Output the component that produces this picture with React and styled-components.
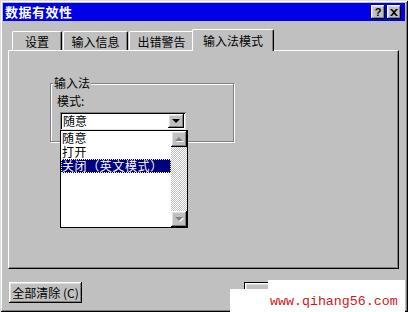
import styled, { createGlobalStyle } from "styled-components";

// GLOBAL ////////////////////////////////////////////////////////////
const GlobalStyle = createGlobalStyle`
  html, body {
    margin: 0;
    padding: 0;
    background: #c0c0c0;
  }
  body {
    font-family: "Noto Sans CJK SC", "Noto Sans", sans-serif;
    font-size: 12px;
    color: #000;
  }
  * {
    box-sizing: border-box;
  }
`;

const tabs = [
  { label: "设置", width: 50 },
  { label: "输入信息", width: 65 },
  { label: "出错警告", width: 65 },
  { label: "输入法模式", width: 82, active: true },
];

const options = ["随意", "打开", "关闭（英文模式）"];

const App = () => {
  return (
    <>
      <GlobalStyle />
      <Window>
        <TitleBar>
          <Title>数据有效性</Title>
          <CaptionButtons>
            <CaptionButton>?</CaptionButton>
            <CaptionButton>
              <svg width="8" height="7" viewBox="0 0 8 7">
                <path d="M0 0h2l2 2 2-2h2L5 3.5 8 7H6L4 5 2 7H0l3-3.5z" fill="#000" />
              </svg>
            </CaptionButton>
          </CaptionButtons>
        </TitleBar>

        <TabRow>
          {tabs.map((t) => (
            <Tab key={t.label} $width={t.width} $active={t.active}>
              {t.label}
            </Tab>
          ))}
        </TabRow>

        <Panel>
          <GroupBox>
            <Legend>输入法</Legend>
            <FieldLabel>模式:</FieldLabel>
            <Combo>
              <ComboValue>随意</ComboValue>
              <ArrowButton>
                <Arrow />
              </ArrowButton>
              <ListBox>
                <Items>
                  {options.map((o, i) => (
                    <Item key={o} $selected={i === 2}>
                      {o}
                    </Item>
                  ))}
                </Items>
                <ScrollBar>
                  <ScrollButton>
                    <ScrollArrow $up />
                  </ScrollButton>
                  <Track />
                  <ScrollButton>
                    <ScrollArrow />
                  </ScrollButton>
                </ScrollBar>
              </ListBox>
            </Combo>
          </GroupBox>
        </Panel>

        <Footer>
          <Button>全部清除 (C)</Button>
          {/* OK / Cancel sit under the watermark, only an edge shows */}
          <DefaultButton />
          <Button $width={75} />
        </Footer>

        <Watermark>www.qihang56.com</Watermark>
      </Window>
    </>
  );
};

export default App;

// STYLED COMPONENTS ////////////////////////////////////////////////////////////

const raised = `
  background: #c0c0c0;
  box-shadow: inset -1px -1px #000, inset 1px 1px #fff, inset -2px -2px #808080, inset 2px 2px #dfdfdf;
`;

const Window = styled.div`
  position: relative;
  width: 408px;
  height: 312px;
  padding: 3px;
  display: flex;
  flex-direction: column;
  background: #c0c0c0;
  box-shadow: inset 1px 1px #dfdfdf, inset -1px -1px #000, inset 2px 2px #fff,
    inset -2px -2px #808080;
  overflow: hidden;
`;

const TitleBar = styled.div`
  height: 18px;
  display: flex;
  align-items: center;
  justify-content: space-between;
  padding: 0 4px 0 2px;
  background: #0000e8;
  color: #fff;
`;

const Title = styled.div`
  font-size: 13px;
  font-weight: bold;
  line-height: 18px;
  letter-spacing: 0.5px;
`;

const CaptionButtons = styled.div`
  display: flex;
  gap: 2px;
`;

const CaptionButton = styled.div`
  ${raised}
  width: 14px;
  height: 14px;
  display: flex;
  align-items: center;
  justify-content: center;
  color: #000;
  font-family: "Liberation Sans", sans-serif;
  font-weight: bold;
  font-size: 11px;
  line-height: 14px;
`;

const TabRow = styled.div`
  height: 21px;
  margin-top: 8px;
  padding-left: 9px;
  display: flex;
  align-items: flex-end;
`;

const Tab = styled.div`
  position: relative;
  z-index: ${(p) => (p.$active ? 2 : 1)};
  width: ${(p) => p.$width}px;
  height: ${(p) => (p.$active ? 22 : 19)}px;
  margin-bottom: ${(p) => (p.$active ? -1 : 0)}px;
  margin-left: ${(p) => (p.$active ? -2 : 1)}px;
  padding-top: ${(p) => (p.$active ? 2 : 1)}px;
  display: flex;
  justify-content: center;
  line-height: 17px;
  font-size: 12px;
  background: #c0c0c0;
  border-top: 1px solid #fff;
  border-left: 1px solid #fff;
  border-right: 1px solid #000;
  border-radius: 2px 2px 0 0;
  box-shadow: inset -1px 0 #808080;
  &:first-child {
    margin-left: 0;
  }
`;

const Panel = styled.div`
  position: relative;
  z-index: 1;
  height: 219px;
  width: 391px;
  margin-left: 5px;
  padding: 32px 0 0 41px;
  border-top: 1px solid #fff;
  border-left: 1px solid #fff;
  border-right: 1px solid #000;
  border-bottom: 1px solid #000;
  box-shadow: inset -1px -1px #808080;
`;

const GroupBox = styled.div`
  position: relative;
  width: 184px;
  height: 59px;
  padding: 10px 0 0 6px;
  border: 1px solid #808080;
  box-shadow: inset 1px 1px #fff, 1px 1px #fff;
`;

const Legend = styled.span`
  position: absolute;
  top: -8px;
  left: 2px;
  padding: 0 1px;
  background: #c0c0c0;
  line-height: 14px;
`;

const FieldLabel = styled.div`
  line-height: 14px;
  margin-bottom: 4px;
`;

const Combo = styled.div`
  position: relative;
  width: 126px;
  height: 18px;
  margin-left: 3px;
  display: flex;
  align-items: center;
  background: #fff;
  box-shadow: inset 1px 1px #808080, inset -1px -1px #dfdfdf, inset 2px 2px #000;
  padding: 2px;
`;

const ComboValue = styled.div`
  flex: 1;
  padding-left: 1px;
  line-height: 14px;
`;

const ArrowButton = styled.div`
  ${raised}
  width: 16px;
  height: 14px;
  display: flex;
  align-items: center;
  justify-content: center;
`;

const Arrow = styled.div`
  width: 0;
  height: 0;
  border-left: 4px solid transparent;
  border-right: 4px solid transparent;
  border-top: 4px solid #000;
`;

const ListBox = styled.div`
  position: absolute;
  top: 100%;
  left: 0;
  width: 128px;
  height: 98px;
  display: flex;
  background: #fff;
  border: 1px solid #000;
  z-index: 5;
`;

const Items = styled.div`
  flex: 1;
  display: flex;
  flex-direction: column;
`;

const Item = styled.div`
  height: 14px;
  line-height: 14px;
  padding-left: 1px;
  white-space: nowrap;
  letter-spacing: 0.6px;
  background: ${(p) => (p.$selected ? "#000080" : "transparent")};
  color: ${(p) => (p.$selected ? "#fff" : "#000")};
  outline: ${(p) => (p.$selected ? "1px dotted #ffff80" : "none")};
  outline-offset: -1px;
`;

const ScrollBar = styled.div`
  width: 16px;
  display: flex;
  flex-direction: column;
`;

const ScrollButton = styled.div`
  ${raised}
  width: 16px;
  height: 16px;
  display: flex;
  align-items: center;
  justify-content: center;
`;

const ScrollArrow = styled.div`
  width: 0;
  height: 0;
  border-left: 4px solid transparent;
  border-right: 4px solid transparent;
  ${(p) =>
    p.$up
      ? "border-bottom: 4px solid #808080;"
      : "border-top: 4px solid #808080;"}
  filter: drop-shadow(1px 1px 0 #fff);
`;

const Track = styled.div`
  flex: 1;
  background: repeating-conic-gradient(#c0c0c0 0 25%, #fff 0 50%) 0 0 / 2px 2px;
`;

const Footer = styled.div`
  display: flex;
  margin-top: 13px;
  padding-left: 6px;
  gap: 6px;
`;

const Button = styled.div`
  ${raised}
  width: ${(p) => p.$width || 73}px;
  height: 21px;
  display: flex;
  align-items: center;
  justify-content: center;
  font-size: 12px;
  line-height: 14px;
`;

const DefaultButton = styled(Button)`
  width: 75px;
  margin-left: 156px;
  border: 1px solid #000;
`;

const Watermark = styled.div`
  position: absolute;
  left: 268px;
  top: 280px;
  width: 137px;
  height: 32px;
  padding: 14px 0 0 2px;
  background: #fff;
  color: #d01818;
  font-family: "Liberation Mono", monospace;
  font-size: 13.3px;
  line-height: 16px;
  white-space: nowrap;
  z-index: 10;
  &::before {
    content: "";
    position: absolute;
    left: -38px;
    top: 9px;
    width: 38px;
    bottom: 0;
    background: #fff;
  }
`;
